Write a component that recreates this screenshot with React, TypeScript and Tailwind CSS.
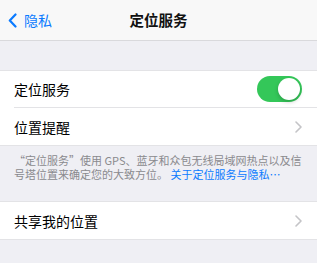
import React from 'react';

const font = { fontFamily: '"Noto Sans CJK SC", "Noto Sans", sans-serif' };

const Chevron = () => (
  <svg width="7" height="12" viewBox="0 0 7 12" className="shrink-0">
    <path d="M1 1l5 5-5 5" fill="none" stroke="#c4c4c7" strokeWidth="1.6" strokeLinecap="round" strokeLinejoin="round" />
  </svg>
);

const Toggle = () => (
  <div className="w-[45px] h-[26px] rounded-full bg-[#34c759] p-[2px] flex justify-end">
    <div className="w-[22px] h-[22px] rounded-full bg-white shadow-[0_2px_4px_rgba(0,0,0,0.2)]" />
  </div>
);

const Row = ({ label, right, divider }: { label: string; right: React.ReactNode; divider?: boolean }) => (
  <div className="pl-[14px] bg-white">
    <div className={`h-[37px] flex items-center justify-between pr-[15px] ${divider ? 'border-b border-[#e3e3e6]' : ''}`}>
      <span className="text-[14px] text-black leading-none">{label}</span>
      {right}
    </div>
  </div>
);

export default function App() {
  return (
    <div className="w-[317px] h-[263px] bg-[#efeff4] overflow-hidden" style={font}>
      <div className="h-[41px] bg-[#f8f8f8] border-b border-[#d9d9dc] flex items-center relative">
        <div className="flex items-center pl-[8px] gap-[7px] text-[#0a7aff]">
          <svg width="9" height="15" viewBox="0 0 9 15">
            <path d="M7.5 1.5L1.8 7.5l5.7 6" fill="none" stroke="#0a7aff" strokeWidth="2.2" strokeLinecap="round" strokeLinejoin="round" />
          </svg>
          <span className="text-[14px] leading-none">隐私</span>
        </div>
        <span className="absolute left-1/2 -translate-x-1/2 text-[14.5px] font-semibold text-[#111] leading-none">定位服务</span>
      </div>

      <div className="h-[29px]" />

      <div className="border-y border-[#e3e3e6]">
        <Row label="定位服务" right={<Toggle />} divider />
        <Row label="位置提醒" right={<Chevron />} />
      </div>

      <div className="h-[55px] px-[14px] pt-[7px] text-[11px] leading-[14px] text-[#8a8a8e]">
        “定位服务”使用 GPS、蓝牙和众包无线局域网热点以及信号塔位置来确定您的大致方位。 <span className="text-[#0a7aff]">关于定位服务与隐私…</span>
      </div>

      <div className="border-y border-[#e3e3e6]">
        <Row label="共享我的位置" right={<Chevron />} />
      </div>
    </div>
  );
}
